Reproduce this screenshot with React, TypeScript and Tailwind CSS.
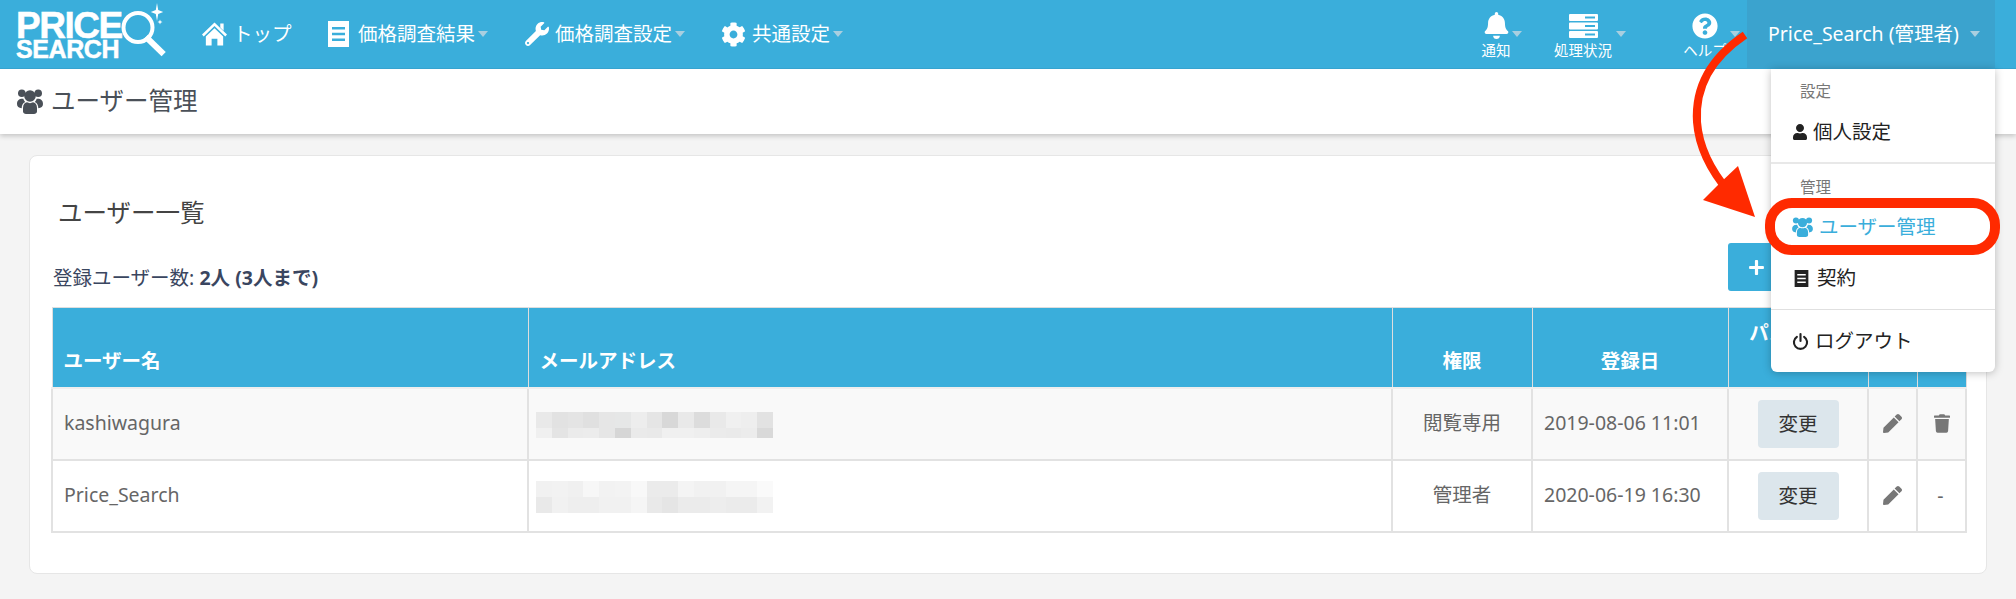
import React from "react";
import { FaWrench, FaCog, FaUser, FaBell, FaQuestionCircle, FaPen, FaTrash, FaPlus } from "react-icons/fa";

const Caret = ({ c = "border-t-[#a9cfe0]" }: { c?: string }) => (
  <span className={`inline-block w-0 h-0 border-x-[5px] border-x-transparent border-t-[6px] ${c}`} />
);

const Doc = ({ className = "" }: { className?: string }) => (
  <svg viewBox="0 0 21 26" className={className} fill="currentColor">
    <path d="M0 0h21v26H0z M4 6v2.5h13V6z M4 11.7v2.6h13v-2.6z M4 17.5V20h13v-2.500z" fillRule="evenodd" />
  </svg>
);

const Home = ({ className = "" }: { className?: string }) => (
  <svg viewBox="0 0 26 24" className={className} fill="currentColor">
    <path d="M13 0L26 12.500l-1.800 2L13 3.800 1.800 14.500 0 12.500z" />
    <path d="M19 1h3.500v7.500L19 5.200z" />
    <path d="M13 6L22 14.500V24h-6v-7h-6v7H4v-9.500z" />
  </svg>
);

const Users = ({ className = "" }: { className?: string }) => (
  <svg viewBox="0 0 26 25" className={className} fill="currentColor">
    <circle cx="4.800" cy="4.300" r="3.800" />
    <circle cx="21.200" cy="4.300" r="3.800" />
    <circle cx="13" cy="7" r="5.800" />
    <path d="M0 15c0-3.500 1.800-5.500 6.300-5.300.4 1.400 1 2.500 1.900 3.300C5.700 14.200 4.700 16.400 4.700 19.300 1.800 19 0 17.500 0 15z" />
    <path d="M26 15c0-3.500-1.800-5.500-6.300-5.300-.4 1.400-1 2.500-1.900 3.300 2.500 1.200 3.500 3.400 3.500 6.300C24.200 19 26 17.500 26 15z" />
    <path d="M6 19c0-3.500 2-5.500 4-5.700 1.800 1.100 4.200 1.100 6 0 2 .2 4 2.200 4 5.700v3.500c0 1.500-1.500 2.500-3 2.500H9c-1.500 0-3-1-3-2.500z" />
  </svg>
);

const Server = ({ className = "" }: { className?: string }) => (
  <svg viewBox="0 0 29 24" className={className} fill="currentColor">
    <path fillRule="evenodd" d="M1 0h27a1 1 0 0 1 1 1v5a1 1 0 0 1-1 1H1a1 1 0 0 1-1-1V1a1 1 0 0 1 1-1z M16 2.500v2h10v-2z" />
    <path fillRule="evenodd" d="M1 8.500h27a1 1 0 0 1 1 1v5a1 1 0 0 1-1 1H1a1 1 0 0 1-1-1v-5a1 1 0 0 1 1-1z M16 11v2h10v-2z" />
    <path fillRule="evenodd" d="M1 17h27a1 1 0 0 1 1 1v5a1 1 0 0 1-1 1H1a1 1 0 0 1-1-1v-5a1 1 0 0 1 1-1z M16 19.500v2h10v-2z" />
  </svg>
);

const Power = ({ className = "" }: { className?: string }) => (
  <svg viewBox="0 0 16 16" className={className} fill="none" stroke="currentColor" strokeWidth="2" strokeLinecap="round">
    <path d="M4.600 3.600a6.200 6.200 0 1 0 6.800 0" />
    <path d="M8 1v6.500" />
  </svg>
);

const m1a = ["#e9e9e9", "#e2e2e2", "#e4e4e4", "#e0e0e0", "#e6e6e6", "#e6e7e7", "#ededed", "#e5e5e5", "#d8d8d8", "#e9e9e9", "#dcdcdc", "#e9e9e9", "#f0f0f0", "#eeeeee", "#e2e2e2"];
const m1b = ["#f0f0f0", "#e4e4e4", "#ebebeb", "#ececec", "#e6e6e6", "#d6d6d6", "#eaeaea", "#e9e9e9", "#f0f0f0", "#f0f0f0", "#eeeeee", "#ebebeb", "#eaeaea", "#ececec", "#d9d9d9"];
const m2a = ["#f1f1f1", "#f2f2f2", "#f0f0f0", "#f7f7f7", "#f2f2f2", "#f3f3f3", "#f8f8f8", "#ebebeb", "#ebebeb", "#f4f4f4", "#f1f1f1", "#f1f1f1", "#f5f5f5", "#f5f5f5", "#fafafa"];
const m2b = ["#e9e9e9", "#f1f1f1", "#eeeeee", "#eeeeee", "#f1f1f1", "#f1f1f1", "#f5f5f5", "#e9e9e9", "#e5e5e5", "#ebebeb", "#ebebeb", "#ededed", "#ebebeb", "#ebebeb", "#f2f2f2"];

const Mosaic = ({ a, b, h }: { a: string[]; b: string[]; h: number }) => (
  <div className="flex flex-col mt-[2px]">
    <div className="flex">
      {a.map((c, i) => (
        <div key={i} className="w-[15.800px] h-[16px]" style={{ background: c }} />
      ))}
    </div>
    <div className="flex">
      {b.map((c, i) => (
        <div key={i} className="w-[15.800px]" style={{ background: c, height: h }} />
      ))}
    </div>
  </div>
);

const NavItem = ({ icon, label, caret = true, gap }: { icon: React.ReactNode; label: string; caret?: boolean; gap: string }) => (
  <div className={`flex items-center ${gap}`}>
    {icon}
    <div className="flex items-center gap-[3px]">
      <span className="text-[19.500px] text-white leading-none">{label}</span>
      {caret && <Caret />}
    </div>
  </div>
);

const IconItem = ({ icon, label, w, caretClass }: { icon: React.ReactNode; label: string; w: string; caretClass: string }) => (
  <div className={`relative flex flex-col items-center ${w}`}>
    <div className="h-[30px] flex items-center">{icon}</div>
    <span className="text-[14.500px] leading-none text-white mt-[2px]">{label}</span>
    <span className={`absolute top-[20px] flex ${caretClass}`}><Caret /></span>
  </div>
);

const Row = ({ name, role, date, mosaic, bg, del, h }: { name: string; role: string; date: string; mosaic: React.ReactNode; bg: string; del: boolean; h: string }) => {
  const td = "border-2 border-[#e2e2e2] text-[#666] text-[19.500px] align-middle";
  return (
    <tr className={`${h} ${bg}`}>
      <td className={`${td} pl-[11px] pb-[2px]`}>{name}</td>
      <td className={`${td} pl-[7px]`}>{mosaic}</td>
      <td className={`${td} text-center pb-[2px]`}>{role}</td>
      <td className={`${td} pl-[11px] pb-[2px] text-[19.300px]`}>{date}</td>
      <td className={`${td} text-center`}>
        <button className="w-[81px] h-[48px] rounded-[4px] bg-[#dce6ec] text-[#333] text-[19.500px]">変更</button>
      </td>
      <td className={`${td}`}>
        <div className="flex justify-center"><FaPen className="w-[19px] h-[19px] text-[#777]" /></div>
      </td>
      <td className={`${td}`}>
        <div className="flex justify-center">
          {del ? <FaTrash className="w-[16px] h-[19px] text-[#777]" /> : <span className="-ml-[2px]">-</span>}
        </div>
      </td>
    </tr>
  );
};

export default function App() {
  const th = "border border-[#dedede] border-b-2 border-b-[#eeeeee] bg-[#3aaedb] text-white font-bold text-[19.500px] align-bottom pb-[12px] leading-[28px]";
  return (
    <div className="relative h-[599px] overflow-hidden bg-[#f4f4f4] font-['Noto_Sans','Noto_Sans_CJK_JP',sans-serif]">
      <header className="relative z-10 flex items-center h-[69px] bg-[#3aaedb] border-b border-[#36a3cf]">
        <div className="relative w-[202px] h-full pl-[16px] pt-[11px] shrink-0 font-['Liberation_Sans',sans-serif] font-bold text-white [-webkit-text-stroke:0.5px_white]">
          <div className="text-[37px] leading-[29px] tracking-[-1.500px]">PRICE</div>
          <div className="text-[25px] leading-[18px] tracking-[-0.400px]">SEARCH</div>
          <svg viewBox="0 0 60 60" className="absolute left-[115px] top-0 w-[60px] h-[60px]" fill="none">
            <circle cx="23" cy="27.500" r="14.500" stroke="white" strokeWidth="4" />
            <path d="M33 39l13.500 13" stroke="white" strokeWidth="6" strokeLinecap="square" />
            <path d="M42 3l1.200 7 5 2-5 2-1.200 7-1.200-7-5-2 5-2z M45 19.500l.7 1.800 1.800.7-1.800.7-.7 1.800-.7-1.800-1.800-.7 1.800-.7z" fill="white" />
          </svg>
        </div>
        <NavItem gap="gap-[6px] w-[126px]" caret={false} icon={<Home className="w-[25px] h-[24px] text-white" />} label="トップ" />
        <NavItem gap="gap-[9px] w-[197px]" icon={<Doc className="w-[21px] h-[26px] text-white" />} label="価格調査結果" />
        <NavItem gap="gap-[6px] w-[196px]" icon={<FaWrench className="w-[24px] h-[24px] text-white" />} label="価格調査設定" />
        <NavItem gap="gap-[6px]" icon={<FaCog className="w-[25px] h-[25px] text-white" />} label="共通設定" />
        <div className="ml-auto flex items-center h-full">
          <IconItem w="w-[76px]" caretClass="left-[54px]" icon={<FaBell className="w-[25px] h-[27px] text-white" />} label="通知" />
          <IconItem w="w-[58px] ml-[20px]" caretClass="left-[62px]" icon={<Server className="w-[29px] h-[24px] text-white" />} label="処理状況" />
          <IconItem w="w-[44px] ml-[71px]" caretClass="left-[47px]" icon={<FaQuestionCircle className="w-[26px] h-[26px] text-white" />} label="ヘルプ" />
          <div className="relative ml-[20px] mr-[21px] w-[248px] h-full bg-[#3ba3ce] flex items-center pl-[21px] gap-[11px]">
            <span className="text-[19.500px] text-white whitespace-nowrap">Price_Search (管理者)</span>
            <Caret />
            <div className="absolute top-[69px] right-0 w-[224px] h-[303px] bg-white rounded-b-[6px] shadow-[0_1px_8px_rgba(0,0,0,0.25)] flex flex-col text-[#222]">
              <div className="h-[93px] flex flex-col pl-[21px]">
                <div className="text-[15.500px] text-[#777] pl-[8px] mt-[11px] leading-[22px]">設定</div>
                <div className="flex items-center gap-[5px] mt-[18px] text-[19.500px] leading-[24px]">
                  <FaUser className="w-[16px] h-[16px]" />個人設定
                </div>
              </div>
              <div className="h-[2px] bg-[#e8e8e8]" />
              <div className="h-[145px] flex flex-col pl-[21px]">
                <div className="text-[15.500px] text-[#777] pl-[8px] mt-[12px] leading-[22px]">管理</div>
                <div className="flex items-center gap-[6px] mt-[17px] text-[19.500px] leading-[24px] text-[#3aaedb]">
                  <Users className="w-[21px] h-[20px]" />ユーザー管理
                </div>
                <div className="flex items-center gap-[8px] mt-[27px] text-[19.500px] leading-[24px]">
                  <Doc className="w-[15px] h-[17px] ml-[2px]" />契約
                </div>
              </div>
              <div className="h-[1px] bg-[#e0e0e0]" />
              <div className="flex items-center gap-[6px] pl-[21px] mt-[19px] text-[19.500px] leading-[24px]">
                <Power className="w-[17px] h-[17px]" />ログアウト
              </div>
            </div>
          </div>
        </div>
      </header>

      <div className="relative h-[65px] bg-white shadow-[0_2px_5px_rgba(0,0,0,0.2)] flex items-center pl-[17px] gap-[8px] text-[24.500px] text-[#4a5058]">
        <Users className="w-[26px] h-[25px] text-[#4a5058]" />
        <span className="leading-none">ユーザー管理</span>
      </div>

      <main className="pt-[21px] pl-[29px] pr-[29px]">
        <section className="h-[419px] bg-white border border-[#e6e6e6] rounded-[8px] pt-[42px] px-[21px]">
          <h2 className="pl-[7px] h-[30px] text-[24.500px] leading-[30px] text-[#444]">ユーザー一覧</h2>
          <div className="flex items-center justify-between h-[48px] mt-[15px] mb-[16px]">
            <div className="pl-[2px] text-[19.500px] text-[#3a4660] mt-[22px]">登録ユーザー数: <b>2人 (3人まで)</b></div>
            <button className="flex items-center gap-[8px] w-[237px] h-[48px] pl-[20px] rounded-[3px] bg-[#3aaedb] text-white text-[18px] font-bold">
              <FaPlus className="w-[17px] h-[17px]" />新規登録
            </button>
          </div>
          <table className="w-[1914px] table-fixed border-collapse">
            <colgroup>
              <col className="w-[476px]" />
              <col className="w-[864px]" />
              <col className="w-[140px]" />
              <col className="w-[196px]" />
              <col className="w-[140px]" />
              <col className="w-[49px]" />
              <col className="w-[49px]" />
            </colgroup>
            <thead>
              <tr className="h-[80px]">
                <th className={`${th} text-left pl-[11px]`}>ユーザー名</th>
                <th className={`${th} text-left pl-[11px]`}>メールアドレス</th>
                <th className={`${th} text-center`}>権限</th>
                <th className={`${th} text-center`}>登録日</th>
                <th className={`${th} text-center`}>パスワード<br />変更</th>
                <th className={`${th} text-center`}>編集</th>
                <th className={`${th} text-center`}>削除</th>
              </tr>
            </thead>
            <tbody>
              <Row h="h-[72px]" name="kashiwagura" role="閲覧専用" date="2019-08-06 11:01" bg="bg-[#f9f9f9]" del mosaic={<Mosaic a={m1a} b={m1b} h={10} />} />
              <Row h="h-[72px]" name="Price_Search" role="管理者" date="2020-06-19 16:30" bg="bg-white" del={false} mosaic={<Mosaic a={m2a} b={m2b} h={16} />} />
            </tbody>
          </table>
        </section>
      </main>

      <svg className="absolute inset-0 z-20 w-[2016px] h-[599px] pointer-events-none" viewBox="0 0 2016 599" fill="none">
        <path d="M1745 35C1708 60 1695 90 1697 122C1699 148 1712 172 1729 192" stroke="#ff2a00" strokeWidth="8" />
        <path d="M1738 166L1755 217L1703 200L1720 183Z" fill="#ff2a00" />
        <rect x="1770" y="203" width="225" height="47" rx="22" stroke="#ff2a00" strokeWidth="10" />
      </svg>
    </div>
  );
}
